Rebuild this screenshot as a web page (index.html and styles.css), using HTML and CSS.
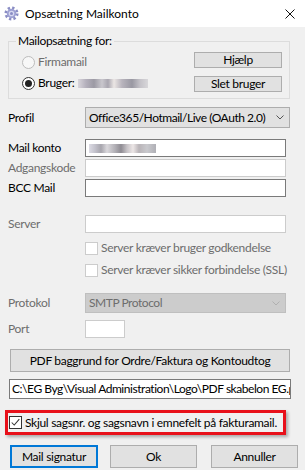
FILE: index.html
```html
<!DOCTYPE html>
<html lang="da">
<head>
    <meta charset="UTF-8">
    <title>Opsætning Mailkonto</title>
    <link rel="stylesheet" href="styles.css">
</head>
<body>
    <div class="titlebar">
        <svg class="gear" viewBox="0 0 16 16" width="15" height="15">
            <circle cx="8" cy="8" r="6" fill="none" stroke="#8a8dc4" stroke-width="3" stroke-dasharray="2.4 2.31"/>
            <circle cx="8" cy="8" r="5" fill="#9da0d2"/>
            <circle cx="8" cy="8" r="3" fill="#d6d8f0"/>
            <circle cx="8" cy="8" r="1.6" fill="#8a8dc4"/>
        </svg>
        <span class="title">Opsætning Mailkonto</span>
        <svg class="close" viewBox="0 0 10 10" width="10" height="10">
            <path d="M0.5 0.5 L9.5 9.5 M9.5 0.5 L0.5 9.5" stroke="#111" stroke-width="1"/>
        </svg>
    </div>

    <fieldset class="group">
        <legend>Mailopsætning for:</legend>
        <div class="group-inner">
            <div class="radios">
                <div class="radio disabled"><span class="dot"></span>Firmamail</div>
                <div class="radio checked"><span class="dot"></span>Bruger: <span class="blur blur-name"></span></div>
            </div>
            <div class="group-buttons">
                <div class="btn">Hjælp</div>
                <div class="btn">Slet bruger</div>
            </div>
        </div>
    </fieldset>

    <div class="row row-profil">
        <span class="lbl">Profil</span>
        <div class="select">
            <span>Office365/Hotmail/Live (OAuth 2.0)</span>
            <svg viewBox="0 0 8 5" width="8" height="5"><path d="M0.5 0.5 L4 4 L7.5 0.5" fill="none" stroke="#555" stroke-width="1"/></svg>
        </div>
    </div>

    <div class="row row-mail">
        <span class="lbl">Mail konto</span>
        <div class="input"><span class="blur blur-mail"></span></div>
    </div>
    <div class="row row-tight">
        <span class="lbl muted">Adgangskode</span>
        <div class="input off"></div>
    </div>
    <div class="row row-tight">
        <span class="lbl">BCC Mail</span>
        <div class="input"></div>
    </div>

    <div class="row row-server">
        <span class="lbl muted">Server</span>
        <div class="input off"></div>
    </div>
    <div class="row row-cb1">
        <span class="lbl"></span>
        <span class="cbox off"></span><span class="muted">Server kræver bruger godkendelse</span>
    </div>
    <div class="row row-cb2">
        <span class="lbl"></span>
        <span class="cbox off"></span><span class="muted">Server kræver sikker forbindelse (SSL)</span>
    </div>

    <div class="row row-proto">
        <span class="lbl muted">Protokol</span>
        <div class="select off">
            <span>SMTP Protocol</span>
            <svg viewBox="0 0 8 5" width="8" height="5"><path d="M0.5 0.5 L4 4 L7.5 0.5" fill="none" stroke="#b0b0b0" stroke-width="1"/></svg>
        </div>
    </div>
    <div class="row row-port">
        <span class="lbl muted">Port</span>
        <div class="input off port"></div>
    </div>

    <div class="btn btn-pdf">PDF baggrund for Ordre/Faktura og Kontoudtog</div>
    <div class="input path"><span>C:\EG Byg\Visual Administration\Logo\PDF skabelon EG.pdf</span></div>

    <div class="highlight">
        <span class="cbox checked">
            <svg viewBox="0 0 13 13" width="11" height="11"><path d="M2 6.5 L5 9.5 L11 2.5" fill="none" stroke="#333" stroke-width="1.2"/></svg>
        </span>
        <span>Skjul sagsnr. og sagsnavn i emnefelt på fakturamail.</span>
    </div>

    <div class="footer">
        <div class="btn btn-default">Mail signatur</div>
        <div class="btn btn-ok">Ok</div>
        <div class="btn btn-cancel">Annuller</div>
    </div>
</body>
</html>
```

FILE: styles.css
```css
* {
    box-sizing: border-box;
}
body {
    margin: 0;
    width: 305px;
    height: 470px;
    overflow: hidden;
    background-color: #f0f0f0;
    color: #000;
    font-family: Lato, "Liberation Sans", sans-serif;
    font-size: 12px;
    line-height: 14px;
    letter-spacing: -0.3px;
}
.titlebar {
    height: 27px;
    background-color: #fff;
    display: flex;
    align-items: center;
    padding: 0 10px 0 4px;
}
.title {
    flex-grow: 1;
    margin-left: 6px;
    letter-spacing: 0;
}
.group {
    margin: 7px 15px 0 8px;
    padding: 0;
    border: 1px solid #dcdcdc;
    min-width: 0;
}
.group legend {
    margin-left: 7px;
    padding: 0 2px;
    line-height: 14px;
}
.group-inner {
    display: flex;
    justify-content: space-between;
    padding: 4px 7px 6px 13px;
}
.radios {
    display: flex;
    flex-direction: column;
    gap: 5px;
    padding-top: 2px;
}
.radio {
    display: flex;
    align-items: center;
    height: 16px;
}
.radio .dot {
    width: 13px;
    height: 13px;
    border-radius: 50%;
    border: 1px solid #333;
    background-color: #fff;
    margin-right: 3px;
    display: flex;
    align-items: center;
    justify-content: center;
}
.radio.disabled {
    color: #6d6d6d;
}
.radio.disabled .dot {
    border-color: #bcbcbc;
    background-color: #f7f7f7;
}
.radio.checked .dot::after {
    content: "";
    width: 7px;
    height: 7px;
    border-radius: 50%;
    background-color: #222;
}
.blur {
    display: inline-block;
    height: 9px;
}
.blur-name {
    width: 70px;
    margin-left: 4px;
    background: linear-gradient(90deg, #d9d6dc 0, #b4b0bc 8px, #9c9aa4 16px, #c9c7cd 24px, #a9a6b0 30px, #ebe6e4 36px, #b8b4bd 44px, #9998a2 54px, #c4c2c8 62px, #d8d7da 70px);
}
.blur-mail {
    width: 67px;
    margin-left: 1px;
    background: linear-gradient(90deg, #dcdbe4 0, #c3c2cc 6px, #a7a5ad 12px, #dad8dc 18px, #b2b0b6 26px, #8f8c93 32px, #c7c3c7 38px, #ece6e6 44px, #b9b4b8 50px, #c9c9cd 58px, #b0b0b6 67px);
}
.group-buttons {
    display: flex;
    flex-direction: column;
    gap: 8px;
}
.btn {
    display: flex;
    align-items: center;
    justify-content: center;
    background-color: #e1e1e1;
    border: 1px solid #adadad;
    white-space: nowrap;
}
.group-buttons .btn {
    width: 88px;
    height: 16px;
}
.row {
    display: flex;
    align-items: center;
    padding-left: 8px;
}
.lbl {
    width: 77px;
    flex-shrink: 0;
}
.muted {
    color: #6d6d6d;
}
.select {
    width: 205px;
    height: 21px;
    display: flex;
    align-items: center;
    justify-content: space-between;
    padding: 0 5px 0 3px;
    background-color: #e1e1e1;
    border: 1px solid #adadad;
    white-space: nowrap;
    letter-spacing: -0.45px;
}
.select.off {
    width: 201px;
    height: 20px;
    background-color: #cccccc;
    border-color: #bfbfbf;
    color: #6d6d6d;
}
.input {
    width: 201px;
    height: 18px;
    display: flex;
    align-items: center;
    padding-left: 2px;
    background-color: #fff;
    border: 1px solid #7a7a7a;
    white-space: nowrap;
    overflow: hidden;
}
.input.off {
    border-color: #cccccc;
}
.input.port {
    width: 40px;
}
.row-profil {
    margin-top: 8px;
}
.row-mail {
    margin-top: 11px;
}
.row-tight {
    margin-top: 2px;
}
.row-server {
    margin-top: 18px;
}
.row-cb1 {
    margin-top: 8px;
}
.row-cb2 {
    margin-top: 8px;
}
.row-proto {
    margin-top: 16px;
}
.row-port {
    margin-top: 7px;
}
.cbox {
    width: 13px;
    height: 13px;
    flex-shrink: 0;
    margin-right: 3px;
    background-color: #fff;
    border: 1px solid #333;
    display: flex;
    align-items: center;
    justify-content: center;
}
.cbox.off {
    border-color: #cccccc;
}
.btn-pdf {
    width: 280px;
    height: 23px;
    margin: 11px 0 0 10px;
}
.input.path {
    width: 282px;
    height: 20px;
    margin: 7px 0 0 9px;
    letter-spacing: -0.45px;
}
.highlight {
    width: 281px;
    height: 25px;
    margin: 11px 0 0 5px;
    padding-left: 1px;
    display: flex;
    align-items: center;
    border: 3px solid #e8101a;
    box-shadow: 2px 2px 3px rgba(0,0,0,0.3);
    white-space: nowrap;
}
.footer {
    display: flex;
    margin: 10px 0 0 10px;
}
.footer .btn {
    height: 23px;
}
.btn-default {
    width: 88px;
    border: 2px solid #0078d7;
}
.btn-ok {
    width: 87px;
    margin-left: 12px;
}
.btn-cancel {
    width: 87px;
    margin-left: 14px;
}
```
